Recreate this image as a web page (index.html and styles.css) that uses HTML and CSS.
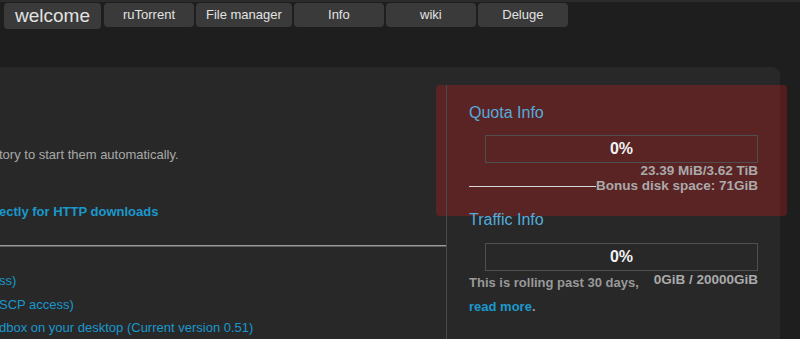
FILE: index.html
```html
<!DOCTYPE html>
<html lang="en">
<head>
    <meta charset="UTF-8">
    <meta name="viewport" content="width=device-width, initial-scale=1.0">
    <title>welcome</title>

<link rel="stylesheet" href="styles.css">

</head>
<body>
    <nav class="tabs">
        <a class="tab tab-home" href="#">welcome</a>
        <a class="tab" href="#">ruTorrent</a>
        <a class="tab" href="#">File manager</a>
        <a class="tab" href="#">Info</a>
        <a class="tab" href="#">wiki</a>
        <a class="tab" href="#">Deluge</a>
    </nav>

    <div class="panel">
        <div class="main-col">
            <p class="intro">tory to start them automatically.</p>
            <p class="http"><a href="#">ectly for HTTP downloads</a></p>
            <hr class="divider">
            <ul class="links">
                <li><a href="#">ss)</a></li>
                <li><a href="#">SCP access)</a></li>
                <li><a href="#">dbox on your desktop (Current version 0.51)</a></li>
            </ul>
        </div>

        <div class="side-col">
            <div class="highlight"></div>

            <h3>Quota Info</h3>
            <div class="bar">0%</div>
            <div class="stats">23.39 MiB/3.62 TiB</div>
            <div class="bonus">
                <span class="rule"></span>
                <span>Bonus disk space: 71GiB</span>
            </div>

            <h3 class="traffic">Traffic Info</h3>
            <div class="bar">0%</div>
            <div class="stats stats-right">0GiB / 20000GiB</div>
            <p class="note">This is rolling past 30 days, <a href="#">read more</a>.</p>
        </div>
    </div>
</body>
</html>
```

FILE: styles.css
```css
 body{
   margin: 0;
   font-family: "Liberation Sans", Arial, sans-serif;
   font-size: 13px;
   background-color: #1e1e1e;
   color: #a8a8a8;
   border-top: 2px solid #2b2b2b;
   overflow: hidden;
 }

 a{
   color: #1a98cd;
   text-decoration: none;
 }

 .tabs{
   display: flex;
   align-items: flex-start;
   gap: 2px;
   padding: 1px 0 0 4px;
 }

 .tab{
   min-width: 70px;
   height: 24px;
   line-height: 24px;
   padding: 0 10px;
   text-align: center;
   background-color: #3a3a3a;
   color: #e2e2e2;
   border-radius: 4px;
   font-size: 13px;
 }

 .tab-home{
   height: 26px;
   line-height: 26px;
   padding: 0 11px;
   font-size: 19px;
   margin-right: 1px;
 }

 .panel{
   position: relative;
   z-index: 0;
   display: flex;
   margin: 38px 20px 0 -20px;
   height: 300px;
   background-color: #282828;
   border-radius: 8px;
 }

 .main-col{
   flex: 0 0 466px;
   box-sizing: border-box;
   padding: 80px 0 0 19px;
   line-height: 15px;
 }

 .intro{
   margin: 0;
 }

 .http{
   margin: 42px 0 0;
   font-weight: bold;
 }

 .divider{
   margin: 26px 0 0 1px;
   border: none;
   border-top: 1px solid #9a9a9a;
   border-bottom: 1px solid #5e5e5e;
 }

 .links{
   list-style-type: none;
   margin: 22px 0 0;
   padding: 0;
   line-height: 23.5px;
 }

 .side-col{
   position: relative;
   flex: 1;
   margin-top: 18px;
   padding: 19px 22px 0;
   border-left: 1px solid #4a4a4a;
 }

 .side-col h3{
   margin: 0;
   font-size: 16px;
   font-weight: normal;
   line-height: 18px;
   color: #55abdc;
 }

 .side-col .traffic{
   margin-top: 18px;
 }

 .bar{
   box-sizing: border-box;
   height: 28px;
   margin: 13px 0 0 16px;
   border: 1px solid #4f4f4f;
   text-align: center;
   line-height: 26px;
   font-size: 16px;
   font-weight: bold;
   color: #f2f2f2;
 }

 .traffic + .bar{
   margin-top: 14px;
 }

 .stats{
   text-align: right;
   font-weight: bold;
   font-size: 13.5px;
   line-height: 15px;
   color: #aaa;
 }

 .stats-right{
   float: right;
   margin-top: 1px;
 }

 .bonus{
   display: flex;
   align-items: center;
   line-height: 15px;
   font-size: 13.5px;
   font-weight: bold;
   color: #aaa;
 }

 .rule{
   flex: 1;
   height: 1px;
   margin-top: 1px;
   background-color: #d8d8d8;
 }

 .note{
   margin: 0;
   line-height: 24px;
   font-weight: bold;
   color: #999;
 }

 .highlight{
   position: absolute;
   z-index: -1;
   top: 0;
   left: -11px;
   width: 351px;
   height: 131px;
   border-radius: 4px;
   background-color: rgba(210, 30, 32, 0.3);
 }
```
